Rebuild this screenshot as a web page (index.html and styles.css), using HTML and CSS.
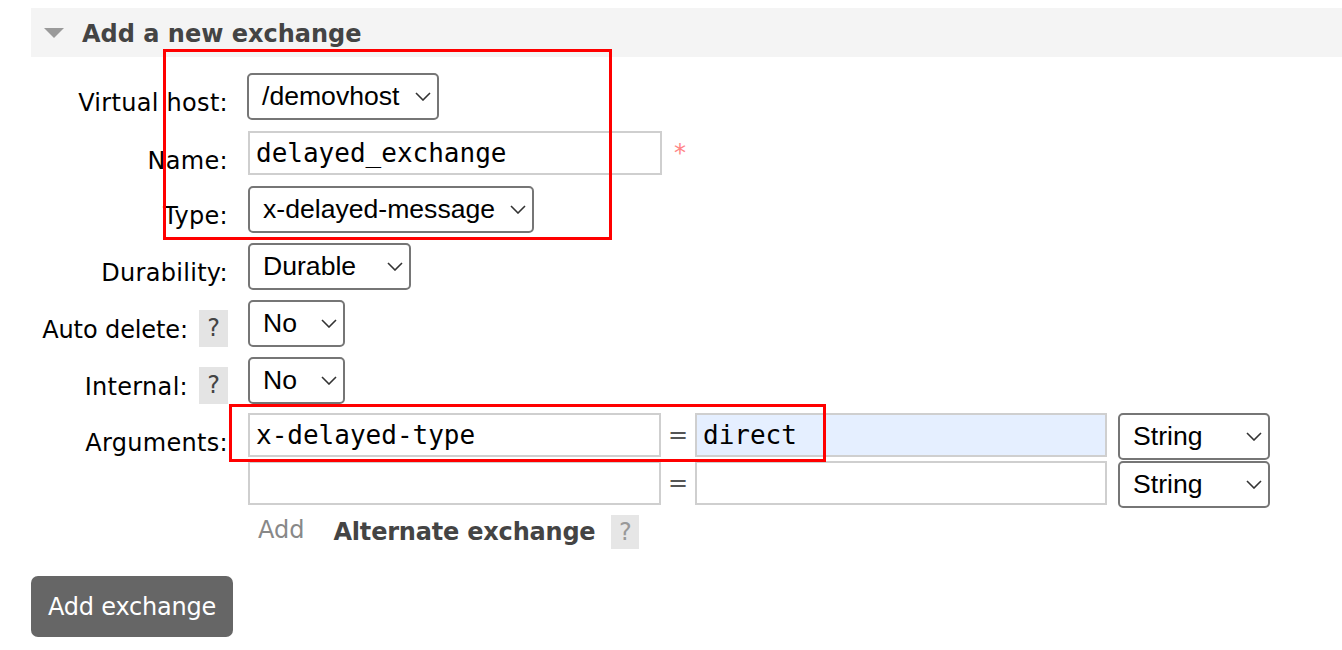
FILE: index.html
```html
<!DOCTYPE html>
<html>
<head>
<meta charset="utf-8">
<title>Add a new exchange</title>
<link rel="stylesheet" href="styles.css">
</head>
<body>
<div class="page">
  <div class="section-head">
    <svg class="tri" width="20" height="10" viewBox="0 0 20 10"><polygon points="0,0 20,0 10,10" fill="#9a9a9a"/></svg>
    <h2>Add a new exchange</h2>
  </div>

  <div class="form">
    <div class="row r-vhost">
      <div class="label"><span class="label-text">Virtual host:</span></div>
      <div class="select w-vhost"><span>/demovhost</span><svg class="chev" width="16" height="9" viewBox="0 0 16 9"><polyline points="1,1 8,8 15,1" fill="none" stroke="#333" stroke-width="1.6"/></svg></div>
    </div>
    <div class="row r-name">
      <div class="label"><span class="label-text">Name:</span></div>
      <div class="input w-name">delayed_exchange</div>
      <span class="req">*</span>
    </div>
    <div class="row">
      <div class="label"><span class="label-text">Type:</span></div>
      <div class="select w-type"><span>x-delayed-message</span><svg class="chev" width="16" height="9" viewBox="0 0 16 9"><polyline points="1,1 8,8 15,1" fill="none" stroke="#333" stroke-width="1.6"/></svg></div>
    </div>
    <div class="row">
      <div class="label"><span class="label-text">Durability:</span></div>
      <div class="select w-dur"><span>Durable</span><svg class="chev" width="16" height="9" viewBox="0 0 16 9"><polyline points="1,1 8,8 15,1" fill="none" stroke="#333" stroke-width="1.6"/></svg></div>
    </div>
    <div class="row">
      <div class="label"><span class="label-text tight">Auto delete:</span><span class="help">?</span></div>
      <div class="select w-no"><span>No</span><svg class="chev" width="16" height="9" viewBox="0 0 16 9"><polyline points="1,1 8,8 15,1" fill="none" stroke="#333" stroke-width="1.6"/></svg></div>
    </div>
    <div class="row r-internal">
      <div class="label"><span class="label-text">Internal:</span><span class="help">?</span></div>
      <div class="select w-no"><span>No</span><svg class="chev" width="16" height="9" viewBox="0 0 16 9"><polyline points="1,1 8,8 15,1" fill="none" stroke="#333" stroke-width="1.6"/></svg></div>
    </div>
    <div class="row r-args">
      <div class="label"><span class="label-text">Arguments:</span></div>
      <div class="args">
        <div class="arg-row">
          <div class="input w-key">x-delayed-type</div>
          <span class="eq">=</span>
          <div class="input w-val filled">direct</div>
          <div class="select w-str"><span>String</span><svg class="chev" width="16" height="9" viewBox="0 0 16 9"><polyline points="1,1 8,8 15,1" fill="none" stroke="#333" stroke-width="1.6"/></svg></div>
        </div>
        <div class="arg-row">
          <div class="input w-key"></div>
          <span class="eq">=</span>
          <div class="input w-val"></div>
          <div class="select w-str"><span>String</span><svg class="chev" width="16" height="9" viewBox="0 0 16 9"><polyline points="1,1 8,8 15,1" fill="none" stroke="#333" stroke-width="1.6"/></svg></div>
        </div>
        <div class="add-row">
          <span class="add-link">Add</span>
          <span class="alt">Alternate exchange</span>
          <span class="help help-light">?</span>
        </div>
      </div>
    </div>
    <div class="actions">
      <button class="btn">Add exchange</button>
    </div>
  </div>

  <div class="annot annot-top"></div>
  <div class="annot annot-args"></div>
</div>
</body>
</html>
```

FILE: styles.css
```css
* { box-sizing: border-box; }

body {
  margin: 0;
  background: #fff;
  font-family: "DejaVu Sans", Verdana, sans-serif;
  font-size: 24px;
  color: #000;
}

.page {
  position: relative;
  padding: 8px 0 0 31px;
  height: 650px;
  overflow: hidden;
}

.section-head {
  height: 49px;
  background: #f4f4f4;
  display: flex;
  align-items: center;
  padding-left: 13px;
  gap: 18px;
}

.section-head h2 {
  margin: 0;
  font-size: 24px;
  font-weight: bold;
  color: #444;
  line-height: 28px;
  padding-top: 2px;
}

.tri { display: block; }

.form {
  display: flex;
  flex-direction: column;
  padding-top: 16px;
}

.row {
  display: flex;
  align-items: flex-start;
  margin-bottom: 10px;
}

.r-vhost, .r-name { margin-bottom: 11px; }
.r-internal { margin-bottom: 9px; }
.r-args { margin-bottom: 0; }

.label {
  width: 197px;
  flex: none;
  display: flex;
  justify-content: flex-end;
  align-items: flex-start;
  gap: 11px;
  margin-right: 20px;
}

.label-text {
  padding-top: 16px;
  line-height: 28px;
  white-space: nowrap;
  letter-spacing: 0.3px;
}

.label-text.tight { letter-spacing: -0.1px; }

.help {
  margin-top: 10px;
  width: 29px;
  height: 37px;
  background: #e4e4e4;
  color: #444;
  text-align: center;
  line-height: 37px;
}

.select {
  height: 47px;
  border: 2px solid #767676;
  border-radius: 5px;
  display: flex;
  align-items: center;
  justify-content: space-between;
  padding: 0 6px 0 13px;
  font-family: "Liberation Sans", Arial, sans-serif;
  font-size: 26.6px;
  color: #000;
  background: #fff;
  flex: none;
}

.chev { display: block; flex: none; }

.w-vhost { width: 192px; margin-left: -1px; }
.w-type { width: 286px; }
.w-dur { width: 163px; }
.w-no { width: 97px; }
.w-str { width: 152px; }

.input {
  height: 44px;
  border: 2px solid #cfcfcf;
  padding-left: 6px;
  font-family: "DejaVu Sans Mono", "Liberation Mono", monospace;
  font-size: 26px;
  display: flex;
  align-items: center;
  background: #fff;
  color: #000;
  flex: none;
}

.w-name { width: 414px; }
.w-key { width: 413px; }
.w-val { width: 412px; }
.filled { background: #e5efff; }

.req {
  color: #ff8585;
  margin-left: 12px;
  margin-top: 8px;
  line-height: 28px;
}

.args {
  display: flex;
  flex-direction: column;
}

.arg-row {
  display: flex;
  align-items: flex-start;
  margin-bottom: 1px;
}

.eq {
  width: 34px;
  text-align: center;
  color: #555;
  line-height: 28px;
  padding-top: 8px;
}

.w-str { margin-left: 11px; }

.add-row {
  display: flex;
  align-items: flex-start;
  margin-top: 6px;
  padding-left: 10px;
}

.add-link {
  color: #888;
  line-height: 28px;
  margin-top: 1px;
}

.alt {
  font-weight: bold;
  color: #444;
  line-height: 28px;
  margin-top: 3px;
  margin-left: 29px;
  letter-spacing: -0.2px;
}

.help-light {
  margin-top: 0;
  margin-left: 16px;
  width: 28px;
  height: 34px;
  line-height: 34px;
  color: #999;
  background: #e6e6e6;
}

.actions {
  margin-top: 27px;
}

.btn {
  width: 202px;
  height: 61px;
  background: #666;
  color: #fff;
  border: none;
  border-radius: 7px;
  font-family: "DejaVu Sans", Verdana, sans-serif;
  font-size: 24px;
  letter-spacing: -0.2px;
  text-align: left;
  padding: 0 0 0 17px;
}

.annot {
  position: absolute;
  border: 3px solid #ff0000;
  pointer-events: none;
}

.annot-top {
  left: 163px;
  top: 49px;
  width: 449px;
  height: 191px;
}

.annot-args {
  left: 229px;
  top: 404px;
  width: 597px;
  height: 58px;
}
```
